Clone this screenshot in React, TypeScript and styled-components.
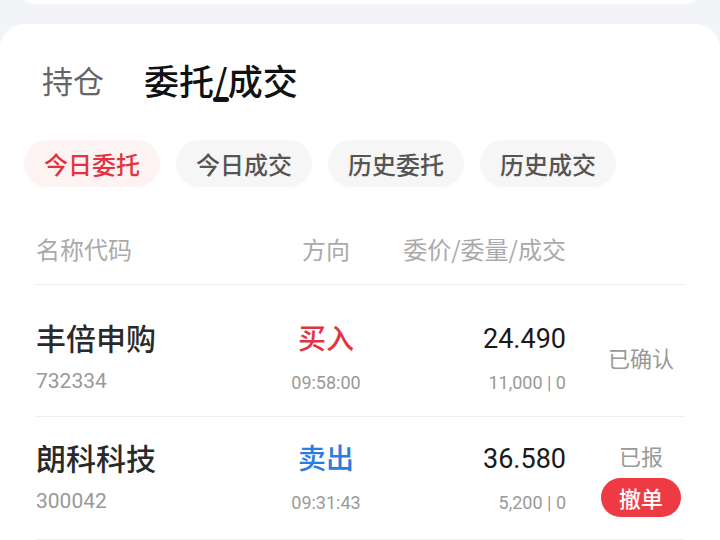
import React from "react";
import styled, { createGlobalStyle } from "styled-components";

const GlobalStyle = createGlobalStyle`
  html, body {
    margin: 0;
    padding: 0;
    background: #f3f4f7;
    font-family: "Noto Sans CJK SC", "Noto Sans", sans-serif;
    overflow: hidden;
  }
`;

const Page = styled.div`
  width: 720px;
  height: 540px;
  overflow: hidden;
  display: flex;
  flex-direction: column;
`;

const TopCard = styled.div`
  height: 60px;
  margin: -56px 16px 0;
  background: #fff;
  border-radius: 20px;
  flex-shrink: 0;
`;

const MainCard = styled.div`
  margin-top: 20px;
  flex: 1;
  background: #fff;
  border-radius: 24px 24px 0 0;
`;

const TitleRow = styled.div`
  display: flex;
  align-items: center;
  gap: 40px;
  padding: 36px 0 0 42px;
`;

const TitleTab = styled.div<{ $active?: boolean }>`
  position: relative;
  height: 40px;
  line-height: 40px;
  font-size: ${(p) => (p.$active ? "35px" : "31px")};
  font-weight: ${(p) => (p.$active ? 500 : 400)};
  color: ${(p) => (p.$active ? "#111" : "#666")};
`;

const Indicator = styled.span`
  position: absolute;
  left: 50%;
  bottom: -2px;
  width: 16px;
  height: 5px;
  margin-left: -8px;
  border-radius: 3px;
  background: #111;
`;

const Pills = styled.div`
  display: flex;
  gap: 16px;
  padding: 40px 24px 0;
`;

const Pill = styled.div<{ $active?: boolean }>`
  width: 136px;
  height: 47px;
  border-radius: 24px;
  display: flex;
  align-items: center;
  justify-content: center;
  font-size: 24px;
  font-weight: 500;
  background: ${(p) => (p.$active ? "#fef3f3" : "#f6f6f6")};
  color: ${(p) => (p.$active ? "#e2333f" : "#555")};
`;

const Table = styled.div`
  margin: 0 36px;
`;

const Grid = styled.div`
  display: grid;
  grid-template-columns: 224px 132px 174px 118px;
  border-bottom: 1px solid #eeeeee;
`;

const HeadRow = styled(Grid)`
  padding: 48px 0 21px;
  font-size: 24px;
  line-height: 28px;
  color: #aaaaaa;
`;

const HeadCell = styled.div<{ $align: "left" | "center" | "right" }>`
  text-align: ${(p) => p.$align};
`;

const Row = styled(Grid)<{ $first?: boolean }>`
  padding: ${(p) => (p.$first ? "35px" : "23px")} 0 22px;
`;

const Cell = styled.div<{ $align: "flex-start" | "center" | "flex-end" }>`
  display: flex;
  flex-direction: column;
  align-items: ${(p) => p.$align};
`;

const Name = styled.div`
  font-size: 30px;
  font-weight: 500;
  line-height: 34px;
  color: #2a2a2a;
`;

const Code = styled.div`
  margin-top: 15px;
  font-family: Roboto, "Noto Sans", sans-serif;
  font-size: 21px;
  line-height: 24px;
  color: #999;
`;

const Direction = styled.div<{ $buy: boolean }>`
  font-size: 28px;
  font-weight: 500;
  line-height: 34px;
  color: ${(p) => (p.$buy ? "#e2333f" : "#2a7ce0")};
`;

const Price = styled.div`
  font-family: Roboto, "Noto Sans", sans-serif;
  font-size: 27px;
  font-weight: 400;
  line-height: 34px;
  color: #1a1a1a;
  transform: translateY(2px);
`;

const Sub = styled.div`
  margin-top: 18px;
  font-family: Roboto, "Noto Sans", sans-serif;
  font-size: 18px;
  line-height: 22px;
  color: #999;
`;

const StatusCell = styled.div`
  align-self: center;
  padding-left: 32px;
  display: flex;
  flex-direction: column;
  align-items: center;
`;

const Status = styled.div`
  font-size: 22px;
  line-height: 30px;
  color: #999;
`;

const CancelButton = styled.button`
  margin-top: 8px;
  height: 39px;
  padding: 0 18px;
  border: none;
  border-radius: 20px;
  background: #ee3a43;
  color: #fff;
  font-family: inherit;
  font-size: 22px;
  font-weight: 500;
  line-height: 39px;
`;

type Order = {
	name: string;
	code: string;
	buy: boolean;
	time: string;
	price: string;
	qty: string;
	status: string;
	cancel?: boolean;
};

const orders: Order[] = [
	{ name: "丰倍申购", code: "732334", buy: true, time: "09:58:00", price: "24.490", qty: "11,000 | 0", status: "已确认" },
	{ name: "朗科科技", code: "300042", buy: false, time: "09:31:43", price: "36.580", qty: "5,200 | 0", status: "已报", cancel: true },
];

const filters = ["今日委托", "今日成交", "历史委托", "历史成交"];

export default function App() {
	return (
		<Page>
			<GlobalStyle />
			<TopCard />
			<MainCard>
				<TitleRow>
					<TitleTab>持仓</TitleTab>
					<TitleTab $active>
						委托/成交
						<Indicator />
					</TitleTab>
				</TitleRow>

				<Pills>
					{filters.map((f, i) => (
						<Pill key={f} $active={i === 0}>
							{f}
						</Pill>
					))}
				</Pills>

				<Table>
					<HeadRow>
						<HeadCell $align="left">名称代码</HeadCell>
						<HeadCell $align="center">方向</HeadCell>
						<HeadCell $align="right">委价/委量/成交</HeadCell>
						<div />
					</HeadRow>

					{orders.map((o, i) => (
						<Row key={o.code} $first={i === 0}>
							<Cell $align="flex-start">
								<Name>{o.name}</Name>
								<Code>{o.code}</Code>
							</Cell>
							<Cell $align="center">
								<Direction $buy={o.buy}>{o.buy ? "买入" : "卖出"}</Direction>
								<Sub>{o.time}</Sub>
							</Cell>
							<Cell $align="flex-end">
								<Price>{o.price}</Price>
								<Sub>{o.qty}</Sub>
							</Cell>
							<StatusCell>
								<Status>{o.status}</Status>
								{o.cancel && <CancelButton>撤单</CancelButton>}
							</StatusCell>
						</Row>
					))}
				</Table>
			</MainCard>
		</Page>
	);
}
